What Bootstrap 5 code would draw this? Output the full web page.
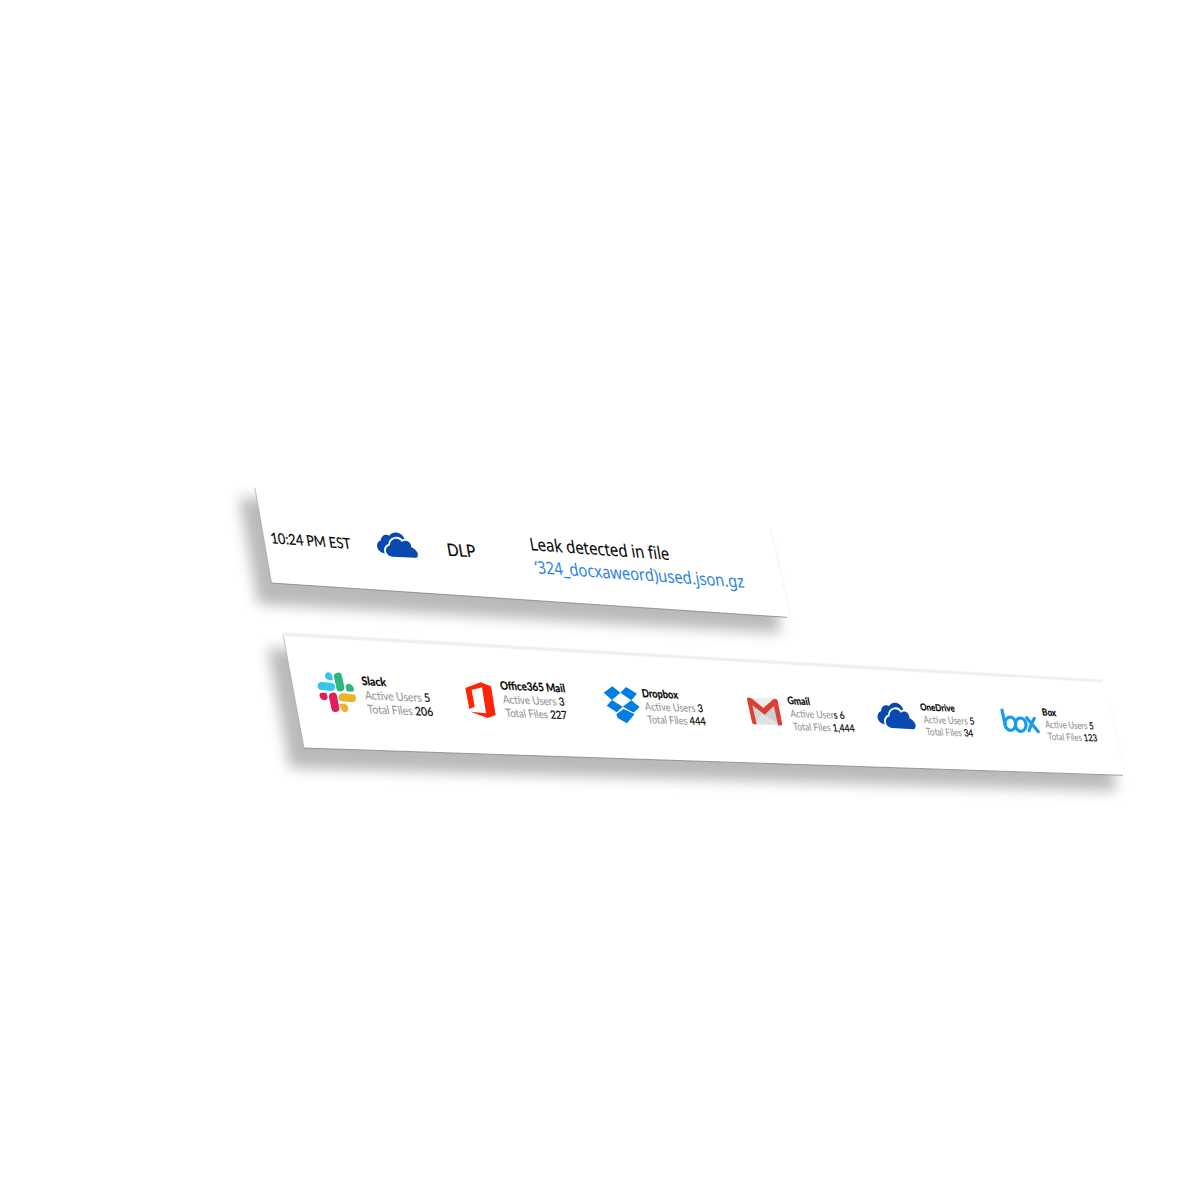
<!DOCTYPE html>
<html lang="en">
<head>
<meta charset="utf-8">
<meta name="viewport" content="width=device-width, initial-scale=1">
<title>Cloud activity</title>
<link href="https://cdn.jsdelivr.net/npm/bootstrap@5.3.0/dist/css/bootstrap.min.css" rel="stylesheet">
<style>
body{background:#fff;color:#000}
.stage{width:1200px;height:1200px;padding-top:480px}
.alert-strip{height:150px;padding-left:260px}
.apps-strip{height:180px;padding-left:310px}
.backdrop{left:0;top:0;z-index:0}
.piece{position:relative;z-index:1;flex:none;overflow:visible}
svg text{font-family:Lato,"Noto Sans",sans-serif;fill:#050505;white-space:pre;stroke:#050505;stroke-width:.2}
svg text.noto{font-family:"Noto Sans","Open Sans",sans-serif;stroke-width:.1}
svg text.file-link{fill:#2b82e3;stroke:none}
svg .dim{fill:#959595;stroke:#959595;stroke-width:.1}
svg .app-title{font-weight:700}
</style>
</head>
<body>
<main class="stage d-flex flex-column overflow-hidden position-relative">
  <!-- tilted sheets and their shadows -->
  <svg class="backdrop position-absolute" width="1200" height="1200" viewBox="0 0 1200 1200" aria-hidden="true">
    <defs><filter id="soft" x="-10%" y="-50%" width="120%" height="200%"><feGaussianBlur stdDeviation="7"/></filter></defs>
    <path d="M239 497L258 604L781 633L765 545Z" fill="#000" opacity=".27" filter="url(#soft)"/>
    <path d="M254 482L271.500 583L791 617.500L770 527Z" fill="#fff"/>
    <path d="M255 488L271.500 583" fill="none" stroke="#999" stroke-width=".6"/>
    <path d="M271.500 583L787 617.300" fill="none" stroke="#777" stroke-width=".7"/>
    <path d="M770 528L791 617" fill="none" stroke="#f1f1f1" stroke-width=".8"/>
    <path d="M268 648L290 768L1117 791L1100 708Z" fill="#000" opacity=".27" filter="url(#soft)"/>
    <path d="M282.500 632L304 748L1124 775.500L1103 679Z" fill="#fff"/>
    <path d="M283 634L304 748" fill="none" stroke="#999" stroke-width=".6"/>
    <path d="M304 748L1123 775.300" fill="none" stroke="#777" stroke-width=".7"/>
    <path d="M283 632.200L1103 679.500V682.500L283.500 636Z" fill="#f0f0f0"/>
  </svg>

  <section class="alert-strip d-flex">
    <svg class="piece" width="110" height="150" viewBox="260 480 110 150"><text transform="matrix(1 .07 .17 1 271.500 543.300)" font-size="15" textLength="80" lengthAdjust="spacingAndGlyphs">10:24 PM EST</text></svg>
    <svg class="piece" width="70" height="150" viewBox="370 480 70 150" role="img" aria-label="OneDrive">
      <defs><g id="drive" fill="#094ab2">
        <path d="M494 250C466 246 464 216 482 211C482 196 497 191 507 197C518 180 546 186 553 207L540 230Z"/>
        <path d="M516 260C494 257 490 232 509 226C509 205 533 199 545 216C556 207 573 215 573 232C587 238 596 250 592 259Q591 264 586 263.500Z" stroke="#fff" stroke-width="11" paint-order="stroke" stroke-linejoin="round"/>
      </g></defs>
      <use href="#drive" transform="translate(220.300 470) scale(.33333)"/>
    </svg>
    <svg class="piece" width="80" height="150" viewBox="440 480 80 150"><text transform="matrix(1 .05 .17 1 448 555.800)" font-size="17" textLength="28.500" lengthAdjust="spacingAndGlyphs">DLP</text></svg>
    <svg class="piece" width="240" height="150" viewBox="520 480 240 150">
      <text class="noto" transform="matrix(1 .07 .17 1 530.700 550.200)" font-size="17.500" textLength="139.500" lengthAdjust="spacingAndGlyphs">Leak detected in file</text>
      <text class="noto file-link" transform="matrix(1 .07 .17 1 536 573.200)" font-size="17.500" textLength="209" lengthAdjust="spacingAndGlyphs">‘324_docxaweord)used.json.gz</text>
    </svg>
  </section>

  <section class="apps-strip d-flex">
    <svg class="piece" width="148" height="180" viewBox="310 630 148 180">
      <g transform="translate(250 610) scale(.33333)" fill="none" stroke-linecap="round" stroke-width="24">
        <path d="M215 228L243 231" stroke="#36c5f0"/><path d="M264 200L271 232" stroke="#2eb67d"/>
        <path d="M249 260L256 294" stroke="#e01e5a"/><path d="M278 262L306 265" stroke="#ecb22e"/>
        <g stroke="none">
          <path d="M249 211L246 196C243 182 223 184 225 199C228 210 237 211 249 211Z" fill="#36c5f0"/>
          <path d="M290 244L287 231C288 217 304 219 310 232Q315 244 307 245Z" fill="#2eb67d"/>
          <path d="M229 248L233 262C233 275 212 273 209 259Q206 247 218 248Z" fill="#e01e5a"/>
          <path d="M269 281L282 281C296 283 300 305 286 306C275 306 272 294 269 281Z" fill="#ecb22e"/>
        </g>
      </g>
      <text class="app-title" transform="matrix(1 .055 .18 1 362.200 685)" font-size="11.800" textLength="24.500" lengthAdjust="spacingAndGlyphs">Slack</text>
      <text transform="matrix(1 .043 .18 1 365.700 699.300)" font-size="11.800" textLength="65" lengthAdjust="spacingAndGlyphs"><tspan class="dim">Active Users </tspan>5</text>
      <text transform="matrix(1 .04 .18 1 368.200 713.300)" font-size="11.800" textLength="65.500" lengthAdjust="spacingAndGlyphs"><tspan class="dim">Total Files </tspan>206</text>
    </svg>
    <svg class="piece" width="142" height="180" viewBox="458 630 142 180">
      <path transform="translate(440 660) scale(.33333)" fill="#fb2407" d="M76 84L122 67L153 79L167 165L143 174L92 155L138 160L126 82L95 90L104 140L88 147Z"/>
      <text class="app-title" transform="matrix(1 .045 .18 1 500.700 689.400)" font-size="11.500" textLength="65" lengthAdjust="spacingAndGlyphs">Office365 Mail</text>
      <text transform="matrix(1 .042 .18 1 503.600 703.200)" font-size="11.300" textLength="61.500" lengthAdjust="spacingAndGlyphs"><tspan class="dim">Active Users </tspan>3</text>
      <text transform="matrix(1 .04 .18 1 506.200 716.700)" font-size="11.300" textLength="61.500" lengthAdjust="spacingAndGlyphs"><tspan class="dim">Total Files </tspan>227</text>
    </svg>
    <svg class="piece" width="140" height="180" viewBox="600 630 140 180">
      <path transform="translate(590 660) scale(.33333)" fill="#007ee5" d="M41 98L67 79L91 98L66 120ZM91 98L108 81L141 101L124 121ZM50 137L66 120L98 140L80 157ZM98 140L124 121L149 141L131 158ZM79 162L101 147L134 162L111 190L83 174Z"/>
      <path transform="translate(590 660) scale(.33333)" fill="none" stroke="#fff" stroke-width="2" d="M76 161L102 144L136 163"/>
      <text class="app-title" transform="matrix(1 .045 .18 1 642.500 697)" font-size="11" textLength="36" lengthAdjust="spacingAndGlyphs">Dropbox</text>
      <text transform="matrix(1 .035 .18 1 645.600 710.200)" font-size="10.800" textLength="58" lengthAdjust="spacingAndGlyphs"><tspan class="dim">Active Users </tspan>3</text>
      <text transform="matrix(1 .033 .18 1 648.200 723.200)" font-size="10.800" textLength="58" lengthAdjust="spacingAndGlyphs"><tspan class="dim">Total Files </tspan>444</text>
    </svg>
    <svg class="piece" width="132" height="180" viewBox="740 630 132 180">
      <g transform="translate(730 670) scale(.33333)">
        <path fill="#e1e1e1" d="M58 84L138 87L154 166L70 163Z"/>
        <path fill="#cfcfcf" d="M98 132L154 166L140 105Z"/><path fill="#d5d5d5" d="M96 132L70 163L62 100Z"/>
        <path fill="#ececec" d="M67 85L131 87L99 113Z"/>
        <path fill="#dc3f36" d="M51 88Q50 82 58 83L64 85L100 114L130 88L137 86Q142 87 143 92L157 163Q156 168 144 166L132 108L104 134L67 106L80 163H73Q68 163 66 157Z"/>
      </g>
      <text class="app-title" transform="matrix(1 .045 .18 1 787.900 704.100)" font-size="10.500" textLength="22.500" lengthAdjust="spacingAndGlyphs">Gmail</text>
      <text transform="matrix(1 .037 .18 1 791.100 717)" font-size="10.300" textLength="54" lengthAdjust="spacingAndGlyphs"><tspan class="dim">Active User</tspan>s 6</text>
      <text transform="matrix(1 .033 .18 1 793.700 730)" font-size="10.300" textLength="61.500" lengthAdjust="spacingAndGlyphs"><tspan class="dim">Total Files </tspan>1,444</text>
    </svg>
    <svg class="piece" width="123" height="180" viewBox="872 630 123 180">
      <use href="#drive" transform="translate(731 637.800) scale(.3115 .3467)"/>
      <text class="app-title" transform="matrix(1 .04 .18 1 920.700 710.300)" font-size="9.500" textLength="34.500" lengthAdjust="spacingAndGlyphs">OneDrive</text>
      <text transform="matrix(1 .035 .18 1 924.300 723)" font-size="10" textLength="50.500" lengthAdjust="spacingAndGlyphs"><tspan class="dim">Active Users </tspan>5</text>
      <text transform="matrix(1 .035 .18 1 926.800 735)" font-size="10" textLength="47" lengthAdjust="spacingAndGlyphs"><tspan class="dim">Total Files </tspan>34</text>
    </svg>
    <svg class="piece" width="125" height="180" viewBox="995 630 125 180">
      <g transform="translate(985 660) scale(.33333)" fill="none" stroke="#169bed" stroke-width="9.500" stroke-linecap="round">
        <path d="M51 150L60 193"/><ellipse cx="76" cy="191" rx="16" ry="20" transform="rotate(-8 76 191)"/>
        <ellipse cx="107" cy="194" rx="16" ry="20" transform="rotate(-8 107 194)"/>
        <path d="M125 173L160 215M148 175L138 195L132 212"/>
      </g>
      <text class="app-title" transform="matrix(1 .04 .18 1 1042.600 715.600)" font-size="9.800" textLength="14" lengthAdjust="spacingAndGlyphs">Box</text>
      <text transform="matrix(1 .035 .18 1 1045.800 727.700)" font-size="9.800" textLength="48.500" lengthAdjust="spacingAndGlyphs"><tspan class="dim">Active Users </tspan>5</text>
      <text transform="matrix(1 .033 .18 1 1048.600 739.800)" font-size="9.800" textLength="49" lengthAdjust="spacingAndGlyphs"><tspan class="dim">Total Files </tspan>123</text>
    </svg>
  </section>
</main>
<script src="https://cdn.jsdelivr.net/npm/bootstrap@5.3.0/dist/js/bootstrap.bundle.min.js"></script>
</body>
</html>
